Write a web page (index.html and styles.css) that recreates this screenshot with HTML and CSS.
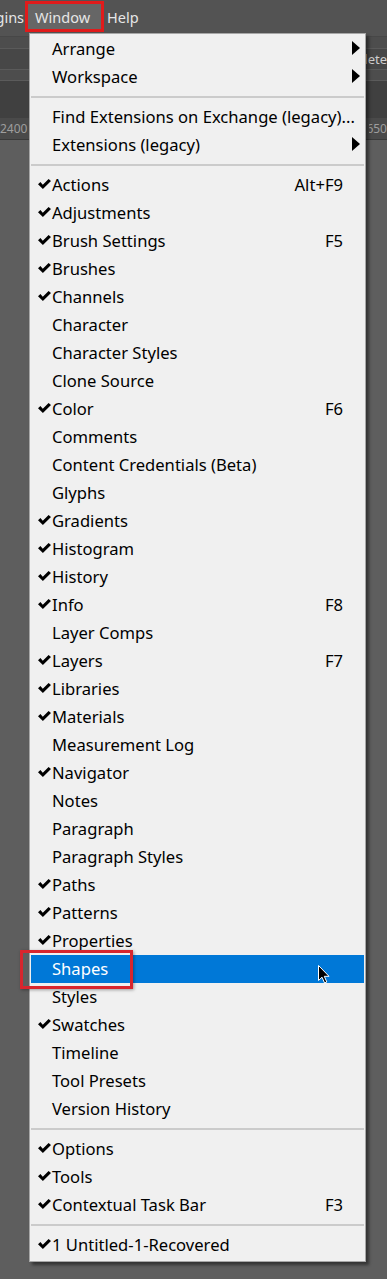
FILE: index.html
```html
<!DOCTYPE html>
<html lang="en">
<head>
    <meta charset="UTF-8">
    <meta name="viewport" content="width=device-width, initial-scale=1.0">
    <title>Window menu</title>
    <link rel="stylesheet" href="styles.css">
</head>
<body>
    <svg class="defs" width="0" height="0">
        <symbol id="check" viewBox="0 0 13 10">
            <path d="M0 5.2 L2.4 3 L4.8 5.8 L10.6 0 L13 2 L4.9 10 Z" fill="#000"/>
        </symbol>
        <symbol id="arrow" viewBox="0 0 8 14">
            <path d="M0 0 L8 7 L0 14 Z" fill="#000"/>
        </symbol>
    </svg>

    <div class="app">
        <div class="menubar">
            <span class="menubar-item first">Plugins</span>
            <span class="menubar-item active">Window</span>
            <span class="menubar-item">Help</span>
        </div>
        <div class="options-bar">
            <div class="options-field"></div>
            <span class="options-btn">Delete</span>
        </div>
        <div class="tabs-bar"></div>
        <div class="ruler">
            <span class="ruler-num">2400</span>
            <span class="ruler-num right">2650</span>
        </div>
        <div class="canvas"></div>

        <div class="dropdown">
            <div class="item"><span class="mark"></span><span class="label">Arrange</span><span class="key"></span><svg class="sub"><use href="#arrow"/></svg></div>
            <div class="item"><span class="mark"></span><span class="label">Workspace</span><span class="key"></span><svg class="sub"><use href="#arrow"/></svg></div>
            <div class="sep"></div>
            <div class="item"><span class="mark"></span><span class="label">Find Extensions on Exchange (legacy)...</span></div>
            <div class="item"><span class="mark"></span><span class="label">Extensions (legacy)</span><span class="key"></span><svg class="sub"><use href="#arrow"/></svg></div>
            <div class="sep"></div>
            <div class="item"><svg class="mark"><use href="#check"/></svg><span class="label">Actions</span><span class="key">Alt+F9</span></div>
            <div class="item"><svg class="mark"><use href="#check"/></svg><span class="label">Adjustments</span></div>
            <div class="item"><svg class="mark"><use href="#check"/></svg><span class="label">Brush Settings</span><span class="key">F5</span></div>
            <div class="item"><svg class="mark"><use href="#check"/></svg><span class="label">Brushes</span></div>
            <div class="item"><svg class="mark"><use href="#check"/></svg><span class="label">Channels</span></div>
            <div class="item"><span class="mark"></span><span class="label">Character</span></div>
            <div class="item"><span class="mark"></span><span class="label">Character Styles</span></div>
            <div class="item"><span class="mark"></span><span class="label">Clone Source</span></div>
            <div class="item"><svg class="mark"><use href="#check"/></svg><span class="label">Color</span><span class="key">F6</span></div>
            <div class="item"><span class="mark"></span><span class="label">Comments</span></div>
            <div class="item"><span class="mark"></span><span class="label">Content Credentials (Beta)</span></div>
            <div class="item"><span class="mark"></span><span class="label">Glyphs</span></div>
            <div class="item"><svg class="mark"><use href="#check"/></svg><span class="label">Gradients</span></div>
            <div class="item"><svg class="mark"><use href="#check"/></svg><span class="label">Histogram</span></div>
            <div class="item"><svg class="mark"><use href="#check"/></svg><span class="label">History</span></div>
            <div class="item"><svg class="mark"><use href="#check"/></svg><span class="label">Info</span><span class="key">F8</span></div>
            <div class="item"><span class="mark"></span><span class="label">Layer Comps</span></div>
            <div class="item"><svg class="mark"><use href="#check"/></svg><span class="label">Layers</span><span class="key">F7</span></div>
            <div class="item"><svg class="mark"><use href="#check"/></svg><span class="label">Libraries</span></div>
            <div class="item"><svg class="mark"><use href="#check"/></svg><span class="label">Materials</span></div>
            <div class="item"><span class="mark"></span><span class="label">Measurement Log</span></div>
            <div class="item"><svg class="mark"><use href="#check"/></svg><span class="label">Navigator</span></div>
            <div class="item"><span class="mark"></span><span class="label">Notes</span></div>
            <div class="item"><span class="mark"></span><span class="label">Paragraph</span></div>
            <div class="item"><span class="mark"></span><span class="label">Paragraph Styles</span></div>
            <div class="item"><svg class="mark"><use href="#check"/></svg><span class="label">Paths</span></div>
            <div class="item"><svg class="mark"><use href="#check"/></svg><span class="label">Patterns</span></div>
            <div class="item"><svg class="mark"><use href="#check"/></svg><span class="label">Properties</span></div>
            <div class="item hover"><span class="mark"></span><span class="label">Shapes</span>
                <svg class="cursor" width="12" height="19" viewBox="0 0 12 19"><path d="M0.5 0.5 L0.5 15.5 L4 12.2 L6.6 18 L8.8 17 L6.3 11.3 L11 11.3 Z" fill="#000" stroke="#fff" stroke-width="1"/></svg>
            </div>
            <div class="item"><span class="mark"></span><span class="label">Styles</span></div>
            <div class="item"><svg class="mark"><use href="#check"/></svg><span class="label">Swatches</span></div>
            <div class="item"><span class="mark"></span><span class="label">Timeline</span></div>
            <div class="item"><span class="mark"></span><span class="label">Tool Presets</span></div>
            <div class="item"><span class="mark"></span><span class="label">Version History</span></div>
            <div class="sep"></div>
            <div class="item"><svg class="mark"><use href="#check"/></svg><span class="label">Options</span></div>
            <div class="item"><svg class="mark"><use href="#check"/></svg><span class="label">Tools</span></div>
            <div class="item"><svg class="mark"><use href="#check"/></svg><span class="label">Contextual Task Bar</span><span class="key">F3</span></div>
            <div class="sep"></div>
            <div class="item"><svg class="mark"><use href="#check"/></svg><span class="label">1 Untitled-1-Recovered</span></div>
        </div>

        <div class="callout"></div>
    </div>
</body>
</html>
```

FILE: styles.css
```css
* {
    box-sizing: border-box;
    margin: 0;
    padding: 0;
}

body {
    background: #5e5e5e;
    font-family: 'Noto Sans', 'Open Sans', sans-serif;
    width: 387px;
    height: 1279px;
    overflow: hidden;
}

.defs {
    position: absolute;
}

.app {
    position: relative;
    height: 1279px;
    display: flex;
    flex-direction: column;
    overflow: hidden;
}

/* Верхнее меню */
.menubar {
    height: 37px;
    background: #535353;
    display: flex;
    align-items: flex-start;
    padding-top: 1px;
    color: #e6e6e6;
    font-size: 14.5px;
    overflow: hidden;
    border-bottom: 1px solid #474747;
}

.menubar-item {
    height: 31px;
    line-height: 26px;
    padding: 0;
    border: 3px solid transparent;
    white-space: nowrap;
}

.menubar-item.first {
    margin-left: -29px;
    margin-right: -5px;
    padding: 0 3px 0 0;
}

.menubar-item.active {
    background: #666666;
    border-color: #e01b1b;
    padding: 0 11px 0 7px;
}

.options-bar {
    height: 44px;
    background: #4d4d4d;
    display: flex;
    align-items: center;
    border-bottom: 1px solid #5b5b5b;
    overflow: hidden;
}

.options-field {
    flex: 1;
    height: 22px;
    background: #474747;
    border-top: 1px solid #5a5a5a;
    border-bottom: 1px solid #5a5a5a;
}

.options-btn {
    height: 22px;
    line-height: 20px;
    font-size: 13px;
    color: #cfcfcf;
    width: 24px;
    direction: rtl;
    overflow: hidden;
    background: #474747;
    border-top: 1px solid #5a5a5a;
    border-bottom: 1px solid #5a5a5a;
}

.tabs-bar {
    height: 37px;
    background: #404040;
}

.ruler {
    height: 22px;
    background: #4a4a4a;
    display: flex;
    justify-content: space-between;
    align-items: center;
    font-size: 12px;
    color: #9e9e9e;
    border-bottom: 1px solid #3a3a3a;
    overflow: hidden;
}

.ruler-num.right {
    width: 18px;
    direction: rtl;
    overflow: hidden;
}

.canvas {
    flex: 1;
    background: #5e5e5e;
}

/* Выпадающее меню */
.dropdown {
    position: absolute;
    left: 29px;
    top: 33px;
    width: 337px;
    background: #f0f0f0;
    border: 1px solid #a7a7a7;
    padding: 1px 1px 2px 1px;
    box-shadow: 3px 3px 3px rgba(0, 0, 0, 0.45);
    color: #000;
    font-size: 16.6px;
}

.item {
    height: 28px;
    display: flex;
    align-items: center;
    position: relative;
    white-space: nowrap;
    padding-bottom: 2px;
}

.mark {
    width: 21px;
    flex-shrink: 0;
}

svg.mark {
    width: 13px;
    height: 10px;
    margin: 0 1px 1px 7px;
}

.label {
    flex: 1;
}

.key {
    padding-right: 21px;
}

.sub {
    width: 8px;
    height: 14px;
    margin-right: 4px;
    margin-left: -12px;
}

.item.hover {
    background: #0078d7;
    color: #fff;
}

.cursor {
    position: absolute;
    left: 287px;
    top: 10px;
}

.sep {
    height: 12px;
    display: flex;
    align-items: center;
}

.sep::before {
    content: '';
    flex: 1;
    height: 2px;
    background: #cbcbcb;
}

/* Красная рамка вокруг Shapes */
.callout {
    position: absolute;
    left: 20px;
    top: 950px;
    width: 113px;
    height: 39px;
    border: 3px solid #d8262e;
    box-shadow: 1px 1px 3px rgba(0, 0, 0, 0.35);
}
```
